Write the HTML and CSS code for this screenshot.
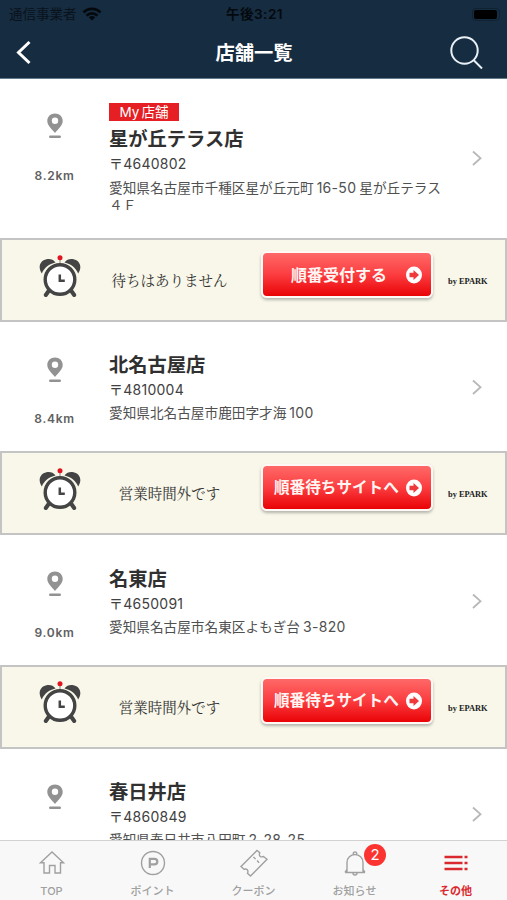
FILE: index.html
```html
<!DOCTYPE html>
<html lang="ja">
<head>
<meta charset="utf-8">
<title>店舗一覧</title>
<link rel="stylesheet" href="styles.css">
</head>
<body>
<svg class="defs" width="0" height="0" aria-hidden="true">
  <symbol id="pin" viewBox="0 0 16 26"><path fill-rule="evenodd" d="M8 .5C3.600.5.3 3.700.3 7.900.3 12.500 5 16 8 20c3-4 7.700-7.500 7.700-12.100C15.700 3.700 12.400.5 8 .5ZM8 4.600a3.200 3.200 0 1 1 0 6.400 3.200 3.200 0 0 1 0-6.400Z"/><rect x="2" y="22.600" width="12" height="2.400" rx="1.200"/></symbol>
  <symbol id="clock" viewBox="0 0 42 42">
    <g fill="#444"><path d="M2.800 18.500C-1.500 12 1 5.500 7.500 4.200c3.500-.7 7 .3 9 3.300C10 9 5.500 12.500 2.800 18.500Z"/><path d="M39.200 18.500C43.500 12 41 5.500 34.500 4.200c-3.500-.7-7 .3-9 3.300 6.500 1.500 11 5 13.700 11Z"/></g>
    <path d="M10 35.500 6.800 40M32 35.500l3.200 4.500" stroke="#444" stroke-width="4" stroke-linecap="round"/>
    <path d="M21 4v6" stroke="#aaa" stroke-width="1.500"/><circle cx="21" cy="2.800" r="2.500" fill="#df1520"/>
    <circle cx="21" cy="24.500" r="14.800" fill="#fff" stroke="#444" stroke-width="3.400"/>
    <path d="M20.800 19.500v6.300h5" fill="none" stroke="#444" stroke-width="2.500"/>
  </symbol>
  <symbol id="chev" viewBox="0 0 10 16"><path d="m1 1.500 7.500 6.700L1 15" fill="none" stroke="#b7b7b7" stroke-width="1.800"/></symbol>
  <symbol id="arrow" viewBox="0 0 16 18"><ellipse cx="8" cy="9" rx="8" ry="8.500" fill="#fff"/><path d="M3.500 6.700h4V4l5.500 5-5.500 5v-2.700h-4Z" fill="#ef3a3d"/></symbol>
</svg>
<header class="header">
  <div class="status">
    <div class="carrier"><span>通信事業者</span><svg width="20" height="14" viewBox="0 0 20 14"><path d="M1.500 5.500a12 12 0 0 1 17 0M4.500 8.600a7.800 7.800 0 0 1 11 0" fill="none" stroke="#04090e" stroke-width="2.700"/><path d="m10 13.500-3.200-3.200a4.500 4.500 0 0 1 6.400 0Z" fill="#04090e"/></svg></div>
    <div class="time">午後3:21</div>
    <div class="battery"><i></i></div>
  </div>
  <div class="nav">
    <svg width="16" height="26" viewBox="0 0 16 26"><path d="M13.500 2 2.500 12.500 13.500 23" fill="none" stroke="#fff" stroke-width="3"/></svg>
    <h1>店舗一覧</h1>
    <svg width="34" height="34" viewBox="0 0 34 34"><g fill="none" stroke="#e9f1f7" stroke-width="2"><circle cx="14.500" cy="14.500" r="13.200"/><path d="m23.500 24 8.500 8.500"/></g></svg>
  </div>
</header>
<main class="list">
  <section class="shop">
    <div class="distance"><svg width="16" height="26"><use href="#pin"/></svg><span>8.2km</span></div>
    <div class="info"><span class="mine">My<i>店舗</i></span><h2>星が丘テラス店</h2><p class="zip">〒4640802</p><p class="address">愛知県名古屋市千種区星が丘元町<b>16-50</b>星が丘テラス<br>４Ｆ</p></div>
    <svg class="chev" width="10" height="16"><use href="#chev"/></svg>
  </section>
  <section class="wait">
    <svg class="clock" width="42" height="42"><use href="#clock"/></svg><span class="state">待ちはありません</span>
    <a class="button receive"><span>順番受付する</span><svg width="16" height="18"><use href="#arrow"/></svg></a><span class="by">by EPARK</span>
  </section>
  <section class="shop">
    <div class="distance"><svg width="16" height="26"><use href="#pin"/></svg><span>8.4km</span></div>
    <div class="info"><h2>北名古屋店</h2><p class="zip">〒4810004</p><p class="address">愛知県北名古屋市鹿田字才海<b>100</b></p></div>
    <svg class="chev" width="10" height="16"><use href="#chev"/></svg>
  </section>
  <section class="wait">
    <svg class="clock" width="42" height="42"><use href="#clock"/></svg><span class="state">営業時間外です</span>
    <a class="button"><span>順番待ちサイトへ</span><svg width="16" height="18"><use href="#arrow"/></svg></a><span class="by">by EPARK</span>
  </section>
  <section class="shop">
    <div class="distance"><svg width="16" height="26"><use href="#pin"/></svg><span>9.0km</span></div>
    <div class="info"><h2>名東店</h2><p class="zip">〒4650091</p><p class="address">愛知県名古屋市名東区よもぎ台<b>3-820</b></p></div>
    <svg class="chev" width="10" height="16"><use href="#chev"/></svg>
  </section>
  <section class="wait">
    <svg class="clock" width="42" height="42"><use href="#clock"/></svg><span class="state">営業時間外です</span>
    <a class="button"><span>順番待ちサイトへ</span><svg width="16" height="18"><use href="#arrow"/></svg></a><span class="by">by EPARK</span>
  </section>
  <section class="shop">
    <div class="distance"><svg width="16" height="26"><use href="#pin"/></svg></div>
    <div class="info"><h2>春日井店</h2><p class="zip">〒4860849</p><p class="address">愛知県春日井市八田町<b>2-28-25</b></p></div>
    <svg class="chev" width="10" height="16"><use href="#chev"/></svg>
  </section>
</main>
<nav class="tabs">
  <a><svg width="28" height="28" viewBox="0 0 28 28"><path d="M2.500 13.800 14 3l11.500 10.800H22.500V24H17v-7.500h-5.500V24H6V13.800Z"/></svg><span>TOP</span></a>
  <a><svg width="28" height="28" viewBox="0 0 28 28"><circle cx="14" cy="14" r="11.500"/><path d="M10.800 19V9.800h4.700a2.700 2.700 0 0 1 0 5.600h-4.700" stroke-width="2.200"/></svg><span>ポイント</span></a>
  <a><svg width="30" height="28" viewBox="0 0 30 28"><path d="M2 17.500 18 1.500l2.800 2.300c-1.300 2.700.7 5 3.700 3.700L28 10.300 11.500 27l-3-2.700c1.300-2.900-.7-5-3.500-4Z"/><path d="m14.500 8 7 7" stroke-dasharray="3 2"/></svg><span>クーポン</span></a>
  <a><svg width="28" height="28" viewBox="0 0 28 28"><path d="M4 23.500h20M6 23.300V13.500a8 8 0 0 1 16 0v9.800M12.300 5.300a1.800 1.800 0 1 1 3.400 0M12 24a2 2 0 0 0 4 0M6 20.500l-2 3M22 20.500l2 3"/></svg><b class="badge">2</b><span>お知らせ</span></a>
  <a class="active"><svg width="28" height="28" viewBox="0 0 28 28"><path d="M2.500 8h18m2 0h3M2.500 14h18m2 0h3M2.500 20h18m2 0h3" stroke-width="2.300"/></svg><span>その他</span></a>
</nav>
</body>
</html>
```

FILE: styles.css
```css
* { box-sizing: border-box; }
body { margin: 0; width: 507px; height: 900px; overflow: hidden; display: flex; flex-direction: column; background: #fff; color: #303030; font-family: Inter, "Noto Sans CJK JP", sans-serif; }
.defs { position: absolute; }
h1, h2, p { margin: 0; }
svg { display: block; flex: none; }
.header { height: 79px; flex: none; background: #162c40; border-bottom: 1px solid #637b8d; }
.status { height: 28px; display: grid; grid-template-columns: 1fr 80px 1fr; align-items: center; padding: 0 7px 0 9px; color: #04090e; font-size: 13.5px; line-height: 28px; }
.carrier { display: flex; align-items: center; gap: 5px; color: #09121b; }
.time { font-weight: 600; text-align: center; font-size: 13.5px; letter-spacing: .5px; white-space: nowrap; }
.battery { justify-self: end; width: 28px; height: 13px; border: 1px solid #102131; border-radius: 4px; padding: 1px; }
.battery i { display: block; width: 23px; height: 9px; background: #000; border-radius: 2px; }
.nav { display: flex; align-items: center; justify-content: space-between; padding: 1px 23px 0 16px; height: 48px; }
.nav h1 { color: #fff; font-size: 19.3px; line-height: 28px; padding-left: 26px; }
.list { height: 761px; overflow: hidden; flex: none; }
.shop { height: 129.4px; display: grid; grid-template-columns: 109px 363px 10px; padding-top: 29.4px; }
.shop:first-child { height: 159px; padding-top: 24px; }
.distance { display: flex; flex-direction: column; align-items: center; gap: 28px; padding-top: 6px; fill: #929292; color: #606060; font-size: 12px; font-weight: 600; line-height: 16px; letter-spacing: .7px; }
.shop:first-child .distance { padding-top: 10px; gap: 29px; }
.mine { display: flex; align-items: center; justify-content: center; gap: 2px; width: 70px; height: 18px; background: #e51f24; color: #fff; font-size: 13.5px; line-height: 18px; margin-bottom: 4px; }
.mine i { font-style: normal; }
h2 { font-size: 19.3px; line-height: 28px; height: 28px; }
.zip { font-size: 14px; line-height: 22px; height: 22px; letter-spacing: .25px; color: #414141; }
.address { font-size: 13.650px; line-height: 17px; color: #505050; margin-top: 3px; white-space: nowrap; }
.shop:first-child .address { margin-top: 4px; }
.address b { font-weight: 400; font-size: 14px; margin: 0 3px; letter-spacing: .3px; }
.chev { margin-top: 28px; }
.shop:first-child .chev { margin-top: 47px; }
.wait { height: 84px; background: #f8f7e9; border: 2px solid #c4c4c4; display: grid; grid-template-columns: 52px 170px 173px 1fr; padding: 10.500px 16px 0 37px; align-items: start; }
.clock { margin-top: 4px; }
.state { justify-self: center; padding-top: 17.5px; margin-left: -13px; font-family: "Noto Serif CJK JP", "Noto Serif JP", "Noto Sans CJK JP", serif; font-size: 14.500px; line-height: 24px; color: #333; }
.button { display: flex; align-items: center; justify-content: space-between; height: 47px; width: 172px; border: 2px solid #fff8f4; border-radius: 6px; padding: 1px 9px 0 11px; background: linear-gradient(#ff6968, #fb3d40 50%, #e90306); box-shadow: 0 2px 3px #8889; color: #fff5f2; font-size: 15.600px; font-weight: 700; line-height: 30px; white-space: nowrap; }
.receive { padding-left: 28px; font-size: 16px; }
.by { padding: 22.500px 0 0 14px; font: 700 8.400px/18px "Liberation Serif", serif; white-space: nowrap; color: #222; }
.tabs { height: 60px; flex: none; background: #f8f8f8; border-top: 1px solid #d2d2d2; display: grid; grid-template-columns: repeat(5, 101px); padding-left: 1px; }
.tabs a { position: relative; display: flex; flex-direction: column; align-items: center; padding-top: 8px; gap: 6px; color: #a0a0a0; font-size: 11px; line-height: 17px; font-weight: 500; }
.tabs svg { fill: none; stroke: currentColor; stroke-width: 1.400; }
.tabs .active { color: #da292e; font-weight: 700; }
.badge { position: absolute; left: 60px; top: 3px; width: 22px; height: 22px; border-radius: 50%; background: #fb3431; color: #fff; text-align: center; line-height: 22px; font-size: 15px; font-weight: 400; }
```
